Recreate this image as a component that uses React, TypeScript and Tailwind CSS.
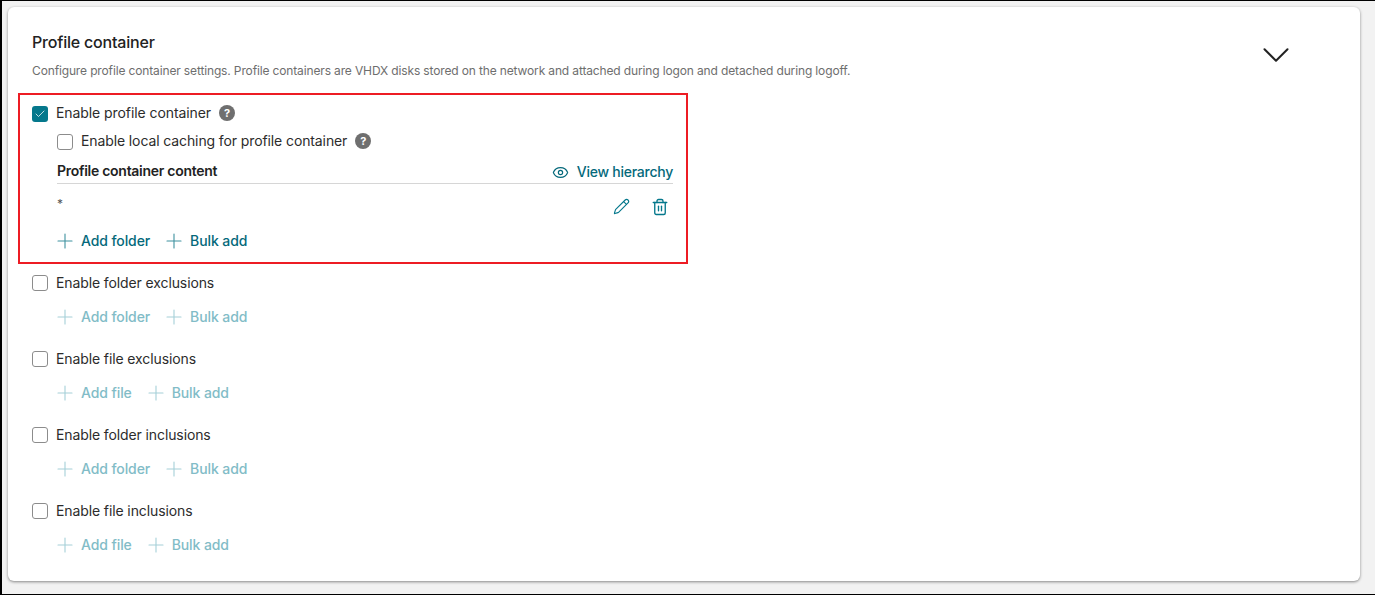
import React from 'react';
import { Check, ChevronDown, Eye, Pencil, Plus, Trash2 } from 'lucide-react';

const Help: React.FC = () => (
  <span className="mb-[2px] flex h-4 w-4 items-center justify-center rounded-full bg-[#6f6f6f] text-[11px] font-bold leading-none text-white">
    ?
  </span>
);

const Box: React.FC<{ checked?: boolean }> = ({ checked }) =>
  checked ? (
    <span className="flex h-4 w-4 shrink-0 items-center justify-center rounded-[3px] bg-[#05788c]">
      <Check size={12} strokeWidth={1.5} className="text-white" />
    </span>
  ) : (
    <span className="h-4 w-4 shrink-0 rounded-[3px] border border-[#8c8c8c] bg-white" />
  );

const AddButton: React.FC<{ label: string; disabled?: boolean }> = ({ label, disabled }) => (
  <span className={`flex items-center gap-2 text-sm font-medium tracking-[-0.1px] ${disabled ? 'text-[#82bcc7]' : 'text-[#05697b]'}`}>
    <Plus size={24} strokeWidth={1.1} className={`-m-1 ${disabled ? 'text-[#a5d0d8]' : 'text-[#3e919f]'}`} />
    {label}
  </span>
);

const Section: React.FC<{ title: string; addLabel: string }> = ({ title, addLabel }) => (
  <div className="h-[76px] pl-[14px]">
    <div className="flex h-4 items-center gap-2 text-sm tracking-[-0.11px] text-[#2c2c2c]">
      <Box />
      {title}
    </div>
    <div className="mt-[18px] flex h-4 items-center gap-4 pl-[25px]">
      <AddButton label={addLabel} disabled />
      <AddButton label="Bulk add" disabled />
    </div>
  </div>
);

const App: React.FC = () => {
  const sections = [
    { title: 'Enable folder exclusions', addLabel: 'Add folder' },
    { title: 'Enable file exclusions', addLabel: 'Add file' },
    { title: 'Enable folder inclusions', addLabel: 'Add folder' },
    { title: 'Enable file inclusions', addLabel: 'Add file' },
  ];

  return (
    <div className="h-[595px] w-[1375px] overflow-hidden border-b border-l-2 border-t border-black bg-[#f2f2f2] pl-[6px] pr-[15px] pt-[6px] font-['Inter',sans-serif] tracking-[-0.2px]">
      <div className="h-[574px] rounded-md bg-white pl-[10px] pt-[25px] shadow-[0_1px_3px_rgba(0,0,0,0.45)]">
        {/* Header */}
        <div className="flex h-[61px] justify-between pl-[14px] pr-[61px]">
          <div>
            <h2 className="text-base font-medium leading-[20px] text-[#222]">Profile container</h2>
            <p className="mt-[11px] text-xs leading-[16px] tracking-[-0.14px] text-[#6e6e6e]">
              Configure profile container settings. Profile containers are VHDX disks stored on the network and attached during logon and detached during logoff.
            </p>
          </div>
          <ChevronDown size={46} strokeWidth={1.05} className="text-[#222]" />
        </div>

        {/* Highlighted */}
        <div className="h-[171px] w-[670px] border-2 border-[#ed1c24] pl-3 pr-[13px] pt-[11px]">
          <div className="flex h-4 items-center gap-2 text-sm tracking-[-0.08px] text-[#2c2c2c]">
            <Box checked />
            <span className="mb-[2px]">Enable profile container</span>
            <Help />
          </div>
          <div className="ml-[25px] mt-3 flex h-4 items-center gap-2 text-sm tracking-[-0.11px] text-[#2c2c2c]">
            <Box />
            <span className="mb-[2px]">Enable local caching for profile container</span>
            <Help />
          </div>
          <div className="ml-[25px] mt-[11px] flex h-[23px] items-center justify-between border-b border-[#d6d6d6] pb-[2px]">
            <span className="text-sm font-semibold tracking-[-0.28px] text-[#222]">Profile container content</span>
            <span className="mt-[2px] flex items-center gap-2 text-sm font-medium tracking-[-0.25px] text-[#05697b]">
              <Eye size={17} strokeWidth={1.7} />
              View hierarchy
            </span>
          </div>
          <div className="ml-[25px] flex h-[36px] justify-between pr-[4px] pt-[14px]">
            <span className="mt-[-2px] text-xs text-[#555]">*</span>
            <span className="flex gap-[21px]">
              <Pencil size={17} strokeWidth={1.6} className="text-[#05788c]" />
              <Trash2 size={18} strokeWidth={1.8} className="text-[#05788c]" />
            </span>
          </div>
          <div className="ml-[25px] mt-[13px] flex h-4 items-center gap-4">
            <AddButton label="Add folder" />
            <AddButton label="Bulk add" />
          </div>
        </div>

        <div className="mt-[11px]">
          {sections.map((s) => (
            <Section key={s.title} title={s.title} addLabel={s.addLabel} />
          ))}
        </div>
      </div>
    </div>
  );
};

export default App;
